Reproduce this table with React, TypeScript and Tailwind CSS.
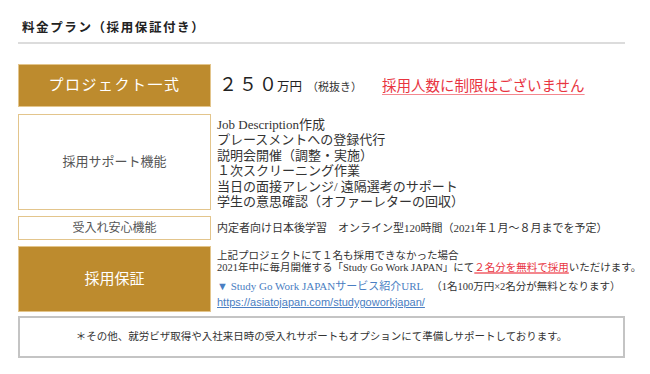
import React from "react";

const F = { fontFamily: '"Liberation Serif", "Noto Sans CJK JP", serif' };

export default function App() {
  return (
    <div className="w-[650px] h-[374px] bg-white text-[#333] overflow-hidden" style={F}>
      <div className="pl-[22px] pt-[19px] text-[12.5px] font-bold tracking-[1.6px] leading-[18px] text-[#222]">
        料金プラン（採用保証付き）
      </div>
      <div className="ml-[18px] w-[607px] h-[2px] bg-[#dcdcdc] mt-[5px]" />
      <div className="ml-[18px] mt-[20px] w-[607px] flex flex-col">
        <div className="flex items-center h-[43px] gap-[8px]">
          <div className="w-[193px] h-full bg-[#bd8b2e] border border-[#e3c58c] flex items-center justify-center text-white text-[15px] tracking-[1.5px]">
            プロジェクト一式
          </div>
          <div className="flex items-baseline">
            <span className="text-[18px] tracking-[2px] text-[#222]">２５０</span>
            <span className="text-[12.5px] ml-[-2px] text-[#222]">万円</span>
            <span className="text-[11px] ml-[5px] text-[#333]">（税抜き）</span>
            <span className="text-[14.5px] ml-[20px] text-[#e8343f] underline decoration-[#f4878e] underline-offset-[3px]">採用人数に制限はございません</span>
          </div>
        </div>
        <div className="flex mt-[7px] gap-[6px]">
          <div className="w-[193px] h-[96px] shrink-0 border border-[#e3c58c] flex items-center justify-center text-[13px] text-[#555]">
            採用サポート機能
          </div>
          <div className="text-[13px] leading-[15.4px] text-[#333] pt-[3px]">
            <div>Job Description作成</div>
            <div>プレースメントへの登録代行</div>
            <div>説明会開催（調整・実施）</div>
            <div>１次スクリーニング作業</div>
            <div>当日の面接アレンジ/ 遠隔選考のサポート</div>
            <div>学生の意思確認（オファーレターの回収）</div>
          </div>
        </div>
        <div className="flex mt-[6px] gap-[6px] items-center">
          <div className="w-[193px] h-[24px] shrink-0 border border-[#e3c58c] flex items-center justify-center text-[12px] text-[#555]">
            受入れ安心機能
          </div>
          <div className="text-[11px] text-[#333] whitespace-nowrap">
            内定者向け日本後学習　オンライン型120時間（2021年１月～８月までを予定）
          </div>
        </div>
        <div className="flex mt-[6px] gap-[6px]">
          <div className="w-[193px] h-[66px] shrink-0 bg-[#bd8b2e] border border-[#e3c58c] flex items-center justify-center text-white text-[15px]">
            採用保証
          </div>
          <div className="text-[10.5px] text-[#333] whitespace-nowrap pt-[4px]">
            <div className="leading-[12px]">上記プロジェクトにて１名も採用できなかった場合</div>
            <div className="leading-[12px]">
              2021年中に毎月開催する「Study Go Work JAPAN」にて
              <span className="text-[#e8343f] underline decoration-[#f4878e] decoration-2 underline-offset-[1px]">２名分を無料で採用</span>
              いただけます。
            </div>
            <div className="leading-[16px] mt-[4px]">
              <span className="text-[#4a7ec2] text-[11px]">▼ Study Go Work JAPANサービス紹介URL</span>
              <span className="ml-[8px]">（1名100万円×2名分が無料となります）</span>
            </div>
            <div className="leading-[15px] text-[11px] text-[#4a7ec2] underline" style={{ fontFamily: '"Liberation Sans", sans-serif' }}>
              https://asiatojapan.com/studygoworkjapan/
            </div>
          </div>
        </div>
        <div className="mt-[4px] h-[42px] border-2 border-[#c4c4c4] flex items-center justify-center text-[10.5px] text-[#333]">
          ＊その他、就労ビザ取得や入社来日時の受入れサポートもオプションにて準備しサポートしております。
        </div>
      </div>
    </div>
  );
}
